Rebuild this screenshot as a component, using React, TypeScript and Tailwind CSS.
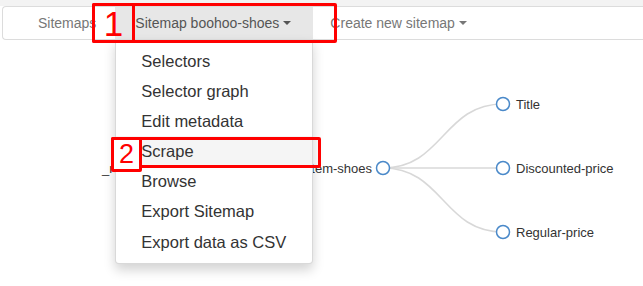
const menuItems = [
  "Selectors",
  "Selector graph",
  "Edit metadata",
  "Scrape",
  "Browse",
  "Export Sitemap",
  "Export data as CSV",
];

const Caret = () => (
  <span className="ml-[4px] inline-block w-0 h-0 border-x-[4px] border-x-transparent border-t-[4px] border-t-current" />
);

const link = (x0: number, y0: number, x1: number, y1: number) => {
  const mx = (x0 + x1) / 2;
  return `M${x0},${y0} C${mx},${y0} ${mx},${y1} ${x1},${y1}`;
};

const TreeGraph = () => {
  const root = { x: 383, y: 168 };
  const children = [
    { x: 503, y: 104, label: "Title" },
    { x: 503, y: 168, label: "Discounted-price" },
    { x: 503, y: 232, label: "Regular-price" },
  ];

  return (
    <svg width={643} height={246} viewBox="0 40 643 246" className="block">
      {/* links */}
      {children.map((c) => (
        <path
          key={c.label}
          d={link(root.x, root.y, c.x, c.y)}
          fill="none"
          stroke="#d8d8d8"
          strokeWidth={1.5}
        />
      ))}
      <text x={102} y={168} dy=".35em" fontSize={13} fill="#333">
        _root
      </text>
      <text x={372} y={168} dy=".35em" fontSize={13} fill="#333" textAnchor="end">
        item-shoes
      </text>
      <circle cx={root.x} cy={root.y} r={6.5} fill="#fff" stroke="#4a89c9" strokeWidth={1.5} />
      {children.map((c) => (
        <g key={c.label + "-node"}>
          <circle cx={c.x} cy={c.y} r={6.5} fill="#fff" stroke="#4a89c9" strokeWidth={1.5} />
          <text x={516} y={c.y} dy=".35em" fontSize={13} fill="#333">
            {c.label}
          </text>
        </g>
      ))}
    </svg>
  );
};

export default function App() {
  return (
    <div className="relative w-[643px] h-[286px] overflow-hidden bg-white font-['Liberation_Sans',Arial,sans-serif]">
      {/* strip above navbar */}
      <div className="h-[6px] bg-[#f3f3f3]" />

      {/* Navbar */}
      <nav className="relative z-10 ml-[2px] h-[34px] flex border border-r-0 border-[#dcdcdc] rounded-l-[4px] bg-white text-[14px] text-[#777]">
        <div className="pl-[15px] flex">
          <div className="px-[20px] flex items-center">Sitemaps</div>

          {/* active dropdown item */}
          <div className="relative w-[198px] -ml-[1px] bg-[#e7e7e7] text-[#555] px-[20px] flex items-center">
            Sitemap boohoo-shoes
            <Caret />

            {/* Dropdown Menu */}
            <div className="absolute left-0 top-full w-[198px] bg-white border border-[rgba(0,0,0,0.15)] rounded-b-[4px] shadow-[0_6px_12px_rgba(0,0,0,0.175)] pt-[6px] pb-[6px] text-[16.5px] text-[#333]">
              {menuItems.map((item) => (
                <div
                  key={item}
                  className={
                    item === "Scrape"
                      ? "h-[30.17px] flex items-center pl-[25px] bg-[#f5f5f5]"
                      : "h-[30.17px] flex items-center pl-[25px]"
                  }
                >
                  {item}
                </div>
              ))}
            </div>
          </div>

          <div className="pl-[17px] flex items-center">
            Create new sitemap
            <Caret />
          </div>
        </div>
      </nav>

      {/* Graph */}
      <TreeGraph />

      {/* Annotation 1 */}
      <div className="absolute z-20 left-[92px] top-[3px] w-[245px] h-[40px] border-[3px] border-[#ff0000] rounded-[2px]" />
      <div className="absolute z-20 left-[92px] top-[3px] w-[43px] h-[40px] border-[3px] border-[#ff0000] rounded-[2px] flex items-center justify-center text-[#ff0000] text-[35px] leading-none">
        1
      </div>

      {/* Annotation 2 */}
      <div className="absolute z-20 left-[111px] top-[137px] w-[210px] h-[31px] border-[3px] border-[#ff0000] rounded-[2px]" />
      <div className="absolute z-20 left-[111px] top-[137px] w-[31px] h-[35px] border-[3px] border-[#ff0000] rounded-[2px] bg-white flex items-center justify-center text-[#ff0000] text-[27px] leading-none">
        2
      </div>
    </div>
  );
}
